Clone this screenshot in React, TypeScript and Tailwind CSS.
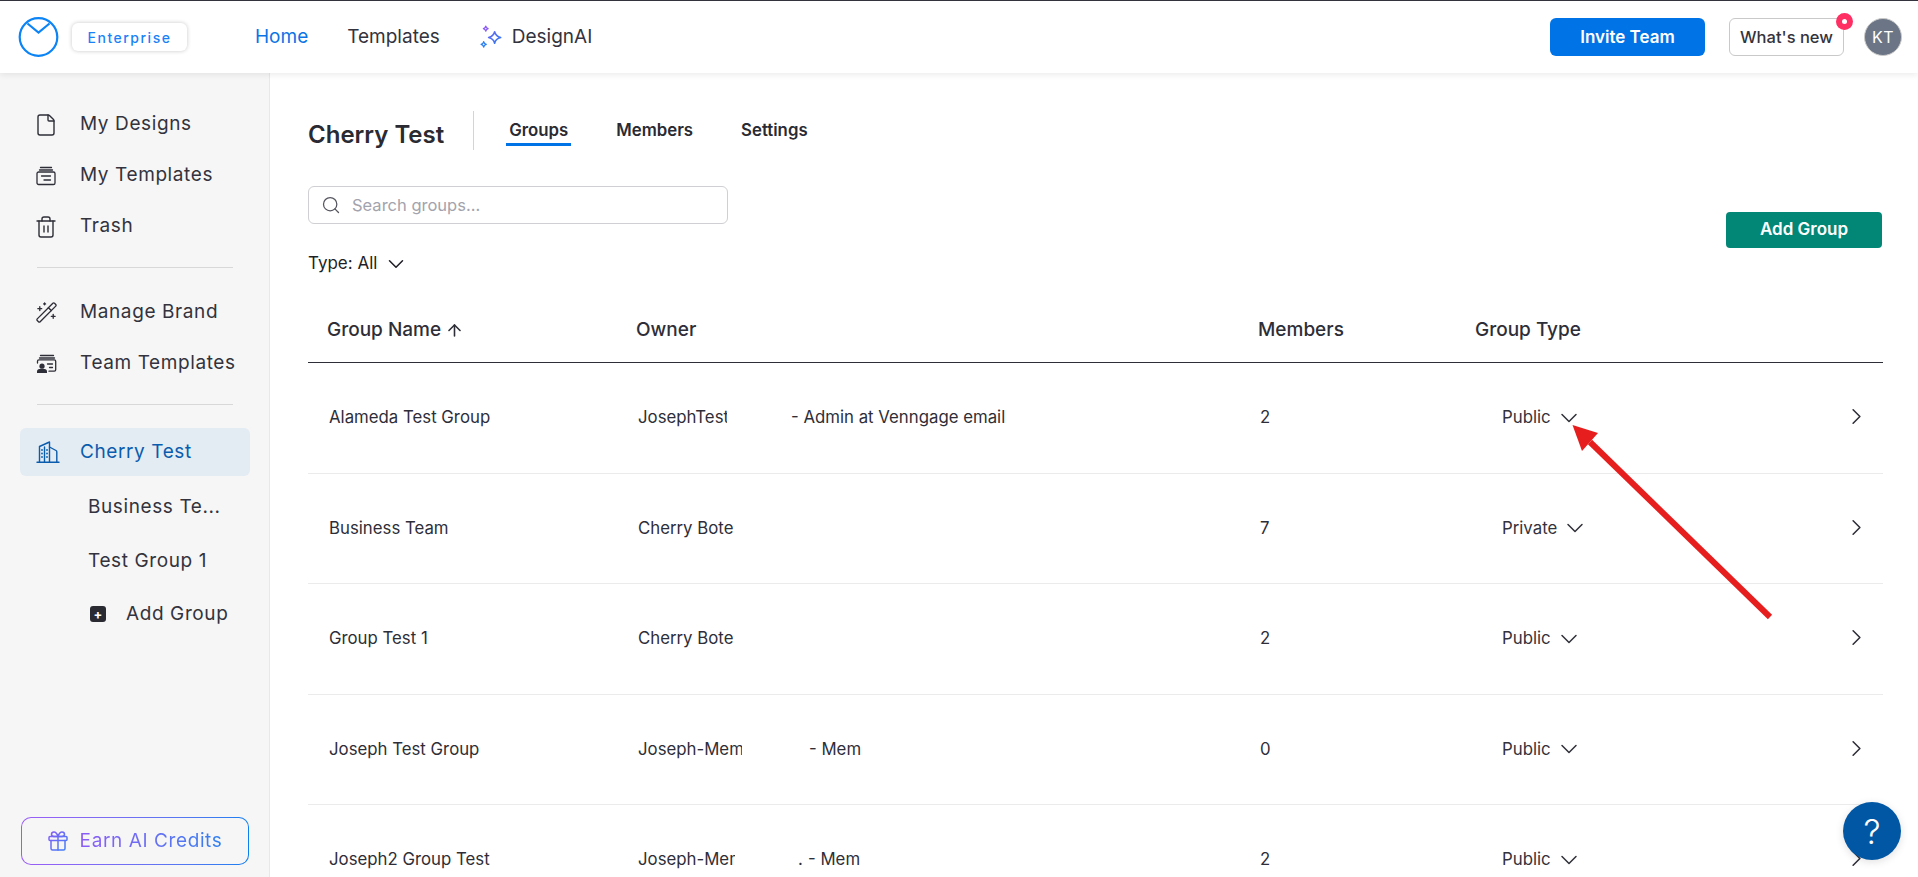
import React from "react";
import { ChevronDown, ChevronRight, File, Search, Trash2, ArrowUp, WandSparkles } from "lucide-react";

function TemplatesIcon() {
  return (
    <svg width="20" height="20" viewBox="0 0 20 20" fill="none" stroke="currentColor" strokeWidth="1.3" strokeLinecap="round">
      <path d="M4.500 1.500h11" />
      <path d="M3.500 4h13" />
      <rect x="1" y="6" width="18" height="12.500" rx="1.600" />
      <path d="M5.500 10h9M8 14h6.500" />
    </svg>
  );
}

function TeamTemplatesIcon() {
  return (
    <svg width="21" height="20" viewBox="0 0 21 20" fill="none" stroke="currentColor" strokeWidth="1.3" strokeLinecap="round">
      <path d="M4.500 1.500h13" />
      <path d="M3.500 4h15" />
      <path d="M1.500 9V7.300c0-.8.6-1.400 1.400-1.400h15.400c.8 0 1.400.6 1.400 1.400v8.500c0 .8-.6 1.400-1.400 1.400h-5.300" />
      <path d="M11.500 10h5M13.500 13.500h3" />
      <circle cx="6" cy="12.200" r="2.600" fill="currentColor" stroke="none" />
      <path d="M1 19v-1.500c0-1.400 1-2.400 2.400-2.400h5.200c1.400 0 2.400 1 2.400 2.400V19z" fill="currentColor" stroke="none" />
    </svg>
  );
}

function BuildingIcon() {
  return (
    <svg width="24" height="24" viewBox="0 0 24 24" fill="none" stroke="#0a5cad" strokeWidth="1.4" strokeLinecap="round" strokeLinejoin="round">
      <path d="M1 22.300h22" />
      <path d="M3.500 22V6.500L13.500 2v20" />
      <path d="M13.500 7l6.500 3.500c.5.3.8.7.8 1.300V22" />
      <path d="M8.500 7v15" />
      <path d="M6 10h.01M11 10h.01M6 13.500h.01M11 13.500h.01M6 17h.01M11 17h.01" strokeWidth="1.800" />
    </svg>
  );
}

function SparkleIcon() {
  return (
    <svg width="23" height="25" viewBox="0 0 22 24" fill="none" strokeLinejoin="round">
      <defs>
        <linearGradient id="spark" x1="0" y1="0" x2="22" y2="24" gradientUnits="userSpaceOnUse">
          <stop offset="0" stopColor="#8b5cf6" />
          <stop offset="1" stopColor="#1a7ff0" />
        </linearGradient>
      </defs>
      <path d="M14 6.500c.7 3 2 4.600 5.800 5.500-3.800.9-5.100 2.500-5.800 5.500-.7-3-2-4.600-5.800-5.500 3.800-.9 5.100-2.500 5.800-5.500z" stroke="url(#spark)" strokeWidth="1.500" />
      <path d="M5.500 1c.3 1.500.9 2.100 2.300 2.500C6.400 3.900 5.800 4.500 5.500 6c-.3-1.500-.9-2.100-2.300-2.500C4.600 3.100 5.200 2.500 5.500 1z" stroke="#8b5cf6" strokeWidth="1.200" />
      <path d="M3.500 16c.3 1.600.9 2.200 2.500 2.600-1.600.4-2.200 1-2.500 2.600-.3-1.600-.9-2.200-2.500-2.600 1.600-.4 2.200-1 2.500-2.600z" stroke="#2a7ff0" strokeWidth="1.200" />
    </svg>
  );
}

function GiftIcon() {
  return (
    <svg width="20" height="20" viewBox="0 0 20 20" fill="none" stroke="url(#gift)" strokeWidth="1.500" strokeLinecap="round" strokeLinejoin="round">
      <defs>
        <linearGradient id="gift" x1="0" y1="0" x2="20" y2="20" gradientUnits="userSpaceOnUse">
          <stop offset="0" stopColor="#8b5cf6" />
          <stop offset="1" stopColor="#3b82f6" />
        </linearGradient>
      </defs>
      <rect x="1" y="5.500" width="18" height="4" rx="1" />
      <path d="M3 9.500v8a1.500 1.500 0 0 0 1.500 1.500h11a1.500 1.500 0 0 0 1.500-1.500v-8" />
      <path d="M10 5.500V19" />
      <path d="M10 5.500C9 2.500 7.500 1 6 1c-1.500 0-2.500 1-2.500 2.300S4.500 5.500 6 5.500zM10 5.500c1-3 2.500-4.500 4-4.500 1.500 0 2.500 1 2.500 2.300S15.500 5.500 14 5.500z" />
    </svg>
  );
}

function SideItem({ icon, label }: { icon: React.ReactNode; label: string }) {
  return (
    <div className="flex h-[51px] items-center">
      <div className="flex w-[44px] justify-start text-[#2e2e38]">{icon}</div>
      <span className="text-[19px] tracking-[0.6px] text-[#33333d]">{label}</span>
    </div>
  );
}

type Row = { name: string; owner: React.ReactNode; members: string; type: string };

const rows: Row[] = [
  {
    name: "Alameda Test Group",
    owner: (
      <span className="flex">
        <span className="w-[89px] overflow-hidden whitespace-nowrap">JosephTest</span>
        <span className="ml-[64px]">- Admin at Venngage email</span>
      </span>
    ),
    members: "2",
    type: "Public",
  },
  { name: "Business Team", owner: "Cherry Bote", members: "7", type: "Private" },
  { name: "Group Test 1", owner: "Cherry Bote", members: "2", type: "Public" },
  {
    name: "Joseph Test Group",
    owner: (
      <span className="flex">
        <span className="w-[104px] overflow-hidden whitespace-nowrap">Joseph-Mem</span>
        <span className="ml-[67px]">- Mem</span>
      </span>
    ),
    members: "0",
    type: "Public",
  },
  {
    name: "Joseph2 Group Test",
    owner: (
      <span className="flex">
        <span className="w-[97px] overflow-hidden whitespace-nowrap">Joseph-Mem</span>
        <span className="ml-[63px] w-[6px] overflow-hidden">.</span>
        <span className="ml-[4px]">- Mem</span>
      </span>
    ),
    members: "2",
    type: "Public",
  },
];

const cols = "grid grid-cols-[328px_622px_217px_1fr_60px] items-center";

export default function App() {
  return (
    <div className="relative flex h-screen flex-col overflow-hidden bg-white font-['Inter',sans-serif] text-[#2e2e38]">
      <header className="relative z-10 flex h-[73px] shrink-0 items-center border-t border-[#33333d] bg-white pr-[16px] pl-[18px] shadow-[0_2px_6px_rgba(0,0,0,0.08)]">
        <svg width="41" height="40" viewBox="0 0 40 40" fill="none" stroke="#0d84f5" strokeWidth="2.200" className="shrink-0">
          <circle cx="20" cy="20" r="18.800" />
          <path d="M9 6.500l11 9 11-9" />
        </svg>
        <div className="ml-[13px] flex h-[28px] w-[115px] items-center justify-center rounded-[6px] bg-white text-[14px] font-medium tracking-[1.5px] text-[#1a82f7] shadow-[0_0_4px_rgba(0,0,0,0.22)]">
          Enterprise
        </div>
        <nav className="ml-[68px] flex items-center text-[19px]">
          <span className="text-[#0b74e5]">Home</span>
          <span className="ml-[39px] text-[#33333d]">Templates</span>
          <span className="ml-[40px] flex items-center gap-[9px] text-[#33333d]">
            <SparkleIcon />
            DesignAI
          </span>
        </nav>
        <div className="ml-auto flex items-center">
          <button className="h-[38px] w-[155px] rounded-[6px] bg-[#0073e6] pt-px text-[17px] font-semibold text-white">Invite Team</button>
          <div className="relative ml-[24px]">
            <button className="h-[38px] w-[115px] rounded-[6px] border border-[#c9c9c9] bg-white pt-px text-[16.500px] font-medium text-[#33333d]">What's new</button>
            <span className="absolute top-[-5px] right-[-9px] flex h-[17px] w-[17px] items-center justify-center rounded-full bg-[#ff2e63]">
              <span className="h-[5px] w-[5px] rounded-full bg-white" />
            </span>
          </div>
          <div className="ml-[20px] flex h-[38px] w-[38px] items-center justify-center rounded-full border border-[#c9c9c9] bg-[#6b7585] text-[16px] tracking-[0.5px] text-white">KT</div>
        </div>
      </header>

      <div className="flex min-h-0 flex-1">
        <aside className="flex w-[270px] shrink-0 flex-col border-r border-[#e8e8e8] bg-[#f6f6f6] pt-[26px] pr-[19px] pb-[12px] pl-[21px]">
          <div className="pl-[15px]">
            <SideItem icon={<File size={24} strokeWidth={1.4} className="-ml-[2px]" />} label="My Designs" />
            <SideItem icon={<TemplatesIcon />} label="My Templates" />
            <SideItem icon={<Trash2 size={24} strokeWidth={1.4} className="-ml-[2px]" />} label="Trash" />
          </div>
          <div className="mt-[15px] ml-[16px] h-px w-[196px] bg-[#d8d8d8]" />
          <div className="mt-[19px] pl-[15px]">
            <SideItem icon={<WandSparkles size={23} strokeWidth={1.4} className="-ml-[1px]" />} label="Manage Brand" />
            <SideItem icon={<TeamTemplatesIcon />} label="Team Templates" />
          </div>
          <div className="mt-[15px] ml-[16px] h-px w-[196px] bg-[#d8d8d8]" />
          <div className="mt-[23px] -ml-px flex h-[48px] items-center rounded-[6px] bg-[#e3ebf3] pl-[16px]">
            <div className="w-[44px]"><BuildingIcon /></div>
            <span className="text-[19px] tracking-[0.6px] text-[#0a5cad]">Cherry Test</span>
          </div>
          <div className="flex h-[62px] items-center pl-[67px] text-[19px] tracking-[0.6px] text-[#33333d]">Business Te...</div>
          <div className="flex h-[46px] items-center pl-[67px] text-[19px] tracking-[0.6px] text-[#33333d]">Test Group 1</div>
          <div className="mt-[6px] flex h-[48px] items-center pl-[69px]">
            <span className="flex h-[16px] w-[16px] items-center justify-center rounded-[3px] bg-[#2a2a33] text-[13px] leading-none font-bold text-white">+</span>
            <span className="ml-[20px] text-[19px] tracking-[0.6px] text-[#33333d]">Add Group</span>
          </div>
          <div className="mt-auto mr-[1px] rounded-[10px] bg-gradient-to-r from-[#9b5cf6] to-[#0a7ff0] p-px">
            <div className="flex h-[46px] items-center justify-center gap-[12px] rounded-[9px] bg-[#f6f6f6]">
              <GiftIcon />
              <span className="bg-gradient-to-r from-[#8b5cf6] to-[#2a7ff0] bg-clip-text text-[19px] tracking-[0.6px] text-transparent">Earn AI Credits</span>
            </div>
          </div>
        </aside>

        <main className="min-w-0 flex-1 pt-[38px] pr-[35px] pl-[38px]">
          <div className="flex h-[40px] items-center">
            <h1 className="pt-[8px] text-[24px] font-semibold text-[#2a2a33]">Cherry Test</h1>
            <div className="ml-[29px] h-[39px] w-px self-start bg-[#d4d4d4]" />
            <div className="ml-[32px] flex self-start text-[16.800px] font-semibold text-[#2a2a33]">
              <span className="border-b-[3px] border-[#0073e6] px-[3px] pt-[7px]">Groups</span>
              <span className="ml-[45px] pt-[7px]">Members</span>
              <span className="ml-[48px] pt-[7px]">Settings</span>
            </div>
          </div>

          <div className="flex items-start justify-between">
            <div>
              <div className="mt-[35px] flex h-[38px] w-[420px] items-center rounded-[6px] border border-[#cfcfd4] pl-[12px] text-[#55555f]">
                <Search size={20} strokeWidth={1.5} />
                <span className="ml-[11px] text-[16.500px] text-[#a3a3ad]">Search groups...</span>
              </div>
              <div className="mt-[27px] flex items-center gap-[6px] text-[17px] text-[#1f1f26]">
                Type: All
                <ChevronDown size={26} strokeWidth={1.4} />
              </div>
            </div>
            <button className="mt-[61px] mr-[1px] h-[36px] w-[156px] rounded-[4px] bg-[#028776] text-[17px] font-semibold text-white">Add Group</button>
          </div>

          <div className={`${cols} mt-[20px] h-[66px] border-b border-[#2e2e38] pt-[2px] text-[19px] font-medium text-[#2e2e38]`}>
            <span className="flex items-center pl-[19px]">
              Group Name <ArrowUp size={19} strokeWidth={2} className="ml-[4px]" />
            </span>
            <span>Owner</span>
            <span>Members</span>
            <span>Group Type</span>
            <span />
          </div>

          {rows.map((r) => (
            <div key={r.name} className={`${cols} h-[110.500px] border-b border-[#ebebeb] text-[16.800px] text-[#2e2e38]`}>
              <span className="pl-[21px]">{r.name}</span>
              <span className="pl-[2px]">{r.owner}</span>
              <span className="pl-[2px]">{r.members}</span>
              <span className="flex items-center pl-[27px] text-[#33333d]">
                {r.type}
                <ChevronDown size={28} strokeWidth={1.3} className="ml-[4px]" />
              </span>
              <span className="-mt-[2px] flex justify-center pl-[6px]"><ChevronRight size={27} strokeWidth={1.4} /></span>
            </div>
          ))}
        </main>
      </div>

      <svg className="pointer-events-none absolute top-[420px] left-[1565px] z-20" width="212" height="204" viewBox="1565 420 212 204" fill="none">
        <path d="M1770 617L1590 442" stroke="#e61e1e" strokeWidth="6" />
        <polygon points="1572.500,425 1598,433 1582,451" fill="#e61e1e" />
      </svg>

      <button className="absolute top-[802px] left-[1843px] z-20 flex h-[58px] w-[58px] items-center justify-center rounded-full bg-[#0257a4] text-[34px] font-light text-white shadow-[0_2px_8px_rgba(0,0,0,0.12)]">?</button>
    </div>
  );
}
